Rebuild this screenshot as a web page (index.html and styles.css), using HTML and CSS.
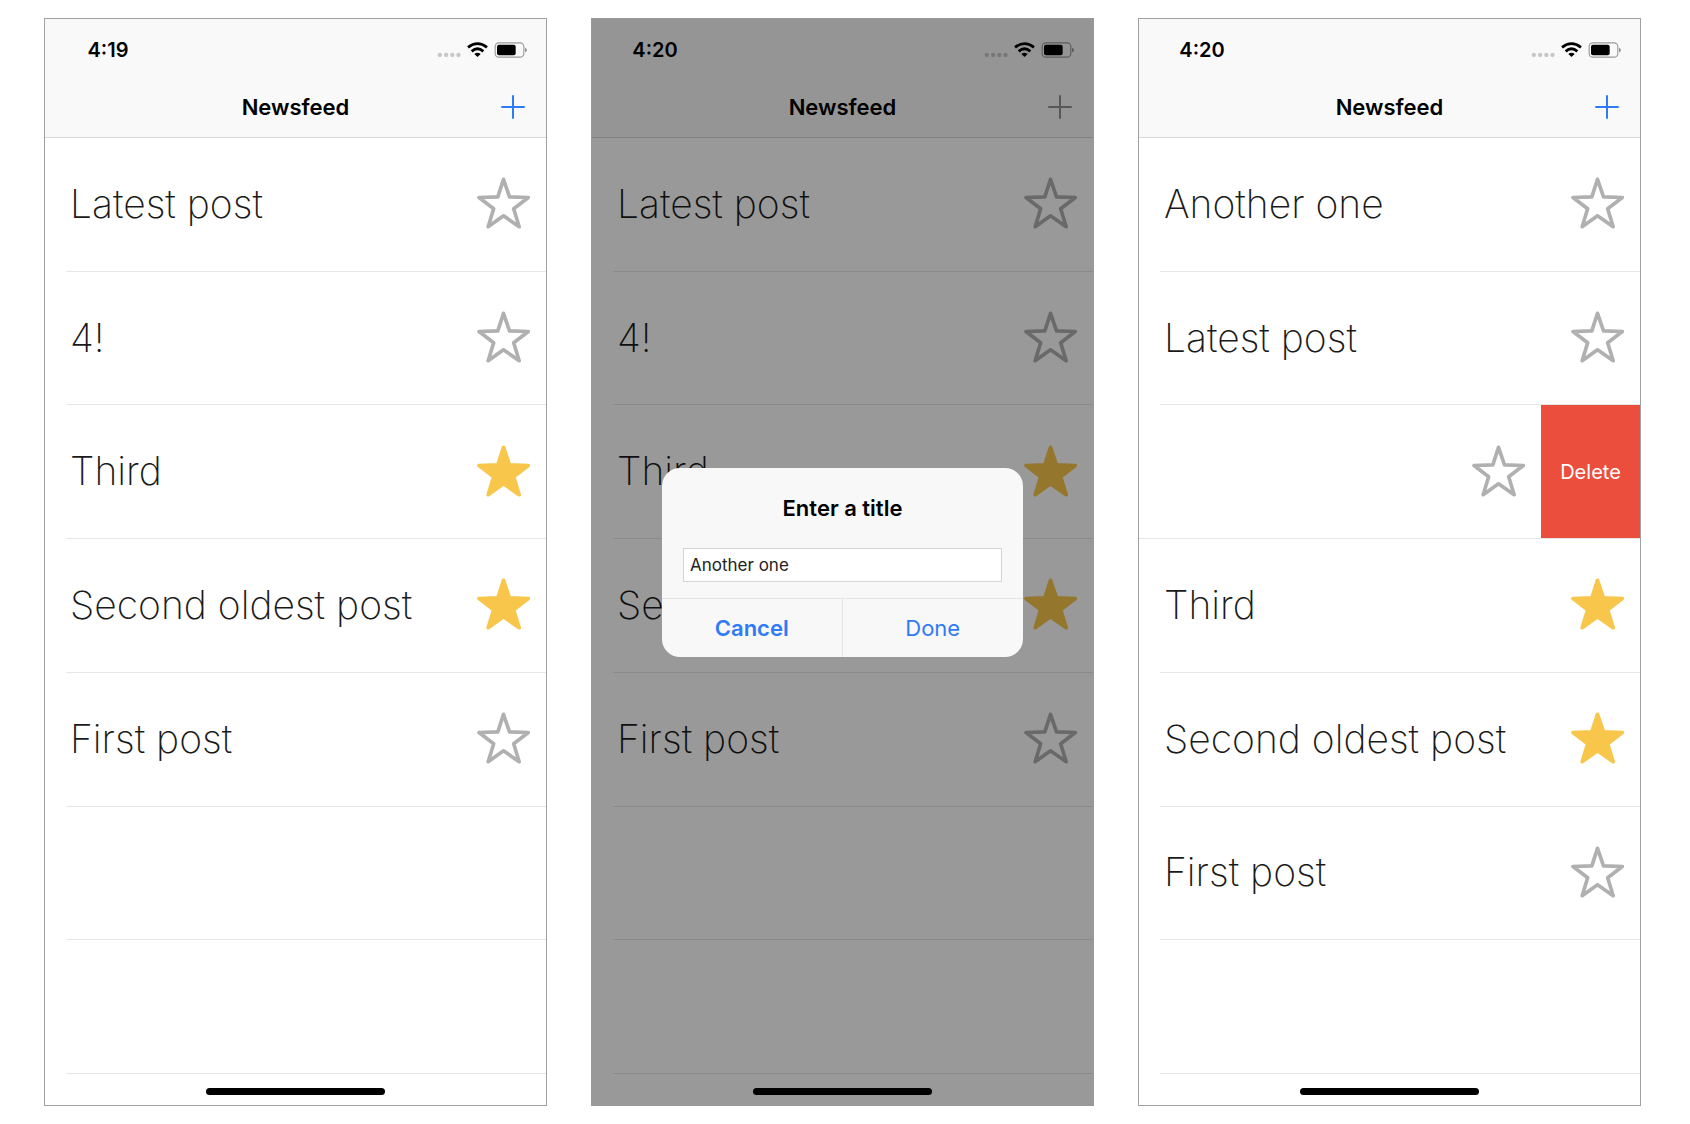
FILE: index.html
```
<!DOCTYPE html>
<html lang="en">
<head>
<meta charset="utf-8">
<title>Newsfeed</title>
<meta name="viewport" content="width=device-width, initial-scale=1">
<link rel="stylesheet" href="styles.css">
</head>
<body>
<svg class="sprite" aria-hidden="true">
  <symbol id="star" viewBox="231 500 159 156">
    <path d="M310.500 507L328.500 559.500L385 561.500L341 595L357.500 649L310.500 616.500L264.500 649L281 595L237 561.500L293.500 559.500Z" stroke-width="11" stroke-linejoin="round"/>
  </symbol>
  <symbol id="status" viewBox="112 90 276 60">
    <g fill="#000" fill-opacity=".2"><circle cx="120.500" cy="135" r="6.500"/><circle cx="139.500" cy="135" r="6.500"/><circle cx="158" cy="135" r="6.500"/><circle cx="176.500" cy="135" r="6.500"/></g>
    <g fill="none" stroke="#000" stroke-width="8.500"><path d="M205 112Q233.500 90 262 112"/><path d="M216 124Q233.500 109 251 124"/></g>
    <path d="M224 132Q233.500 124 243 132L233.500 141Z"/>
    <rect x="286.500" y="98.500" width="86" height="43" rx="11" fill="none" stroke="#000" stroke-opacity=".38" stroke-width="3.500"/>
    <path d="M376 113Q382 115 382 120Q382 125 376 127Z" fill-opacity=".4"/>
    <rect x="292" y="104" width="56" height="32" rx="6"/>
  </symbol>
  <symbol id="plus" viewBox="0 0 24 24"><path d="M12 1V23M1 12H23" fill="none" stroke="currentColor" stroke-width="2" stroke-linecap="round"/></symbol>
</svg>

<main class="gallery">
  <section class="phone">
    <header class="top">
      <div class="status"><span class="time">4:19</span><svg class="indicators" aria-hidden="true"><use href="#status"/></svg></div>
      <div class="nav"><h2 class="nav-title">Newsfeed</h2><button class="add" aria-label="Add post"><svg><use href="#plus"/></svg></button></div>
    </header>
    <ul class="feed">
      <li class="row"><div class="post"><span>Latest post</span><button class="star" aria-label="Favorite"><svg><use href="#star"/></svg></button></div></li>
      <li class="row"><div class="post"><span>4!</span><button class="star" aria-label="Favorite"><svg><use href="#star"/></svg></button></div></li>
      <li class="row"><div class="post"><span>Third</span><button class="star on" aria-label="Favorite"><svg><use href="#star"/></svg></button></div></li>
      <li class="row"><div class="post"><span>Second oldest post</span><button class="star on" aria-label="Favorite"><svg><use href="#star"/></svg></button></div></li>
      <li class="row"><div class="post"><span>First post</span><button class="star" aria-label="Favorite"><svg><use href="#star"/></svg></button></div></li>
      <li class="row"></li>
      <li class="row"></li>
    </ul>
    <footer class="bottom"><div class="home"></div></footer>
  </section>

  <section class="phone dimmed">
    <header class="top">
      <div class="status"><span class="time">4:20</span><svg class="indicators" aria-hidden="true"><use href="#status"/></svg></div>
      <div class="nav"><h2 class="nav-title">Newsfeed</h2><button class="add" aria-label="Add post"><svg><use href="#plus"/></svg></button></div>
    </header>
    <ul class="feed">
      <li class="row"><div class="post"><span>Latest post</span><button class="star" aria-label="Favorite"><svg><use href="#star"/></svg></button></div></li>
      <li class="row"><div class="post"><span>4!</span><button class="star" aria-label="Favorite"><svg><use href="#star"/></svg></button></div></li>
      <li class="row"><div class="post"><span>Third</span><button class="star on" aria-label="Favorite"><svg><use href="#star"/></svg></button></div></li>
      <li class="row"><div class="post"><span>Second oldest post</span><button class="star on" aria-label="Favorite"><svg><use href="#star"/></svg></button></div></li>
      <li class="row"><div class="post"><span>First post</span><button class="star" aria-label="Favorite"><svg><use href="#star"/></svg></button></div></li>
      <li class="row"></li>
      <li class="row"></li>
    </ul>
    <footer class="bottom"><div class="home"></div></footer>
    <div class="overlay">
      <form class="alert" role="dialog" aria-labelledby="alert-title">
        <div class="alert-body">
          <label class="alert-title" id="alert-title" for="post-title">Enter a title</label>
          <input class="alert-input" id="post-title" type="text" value="Another one">
        </div>
        <div class="alert-actions">
          <button class="action cancel" type="button">Cancel</button>
          <button class="action" type="button">Done</button>
        </div>
      </form>
    </div>
  </section>

  <section class="phone">
    <header class="top">
      <div class="status"><span class="time">4:20</span><svg class="indicators" aria-hidden="true"><use href="#status"/></svg></div>
      <div class="nav"><h2 class="nav-title">Newsfeed</h2><button class="add" aria-label="Add post"><svg><use href="#plus"/></svg></button></div>
    </header>
    <ul class="feed">
      <li class="row"><div class="post"><span>Another one</span><button class="star" aria-label="Favorite"><svg><use href="#star"/></svg></button></div></li>
      <li class="row"><div class="post"><span>Latest post</span><button class="star" aria-label="Favorite"><svg><use href="#star"/></svg></button></div></li>
      <li class="row swiped"><div class="post"><button class="star" aria-label="Favorite"><svg><use href="#star"/></svg></button></div><button class="delete">Delete</button></li>
      <li class="row"><div class="post"><span>Third</span><button class="star on" aria-label="Favorite"><svg><use href="#star"/></svg></button></div></li>
      <li class="row"><div class="post"><span>Second oldest post</span><button class="star on" aria-label="Favorite"><svg><use href="#star"/></svg></button></div></li>
      <li class="row"><div class="post"><span>First post</span><button class="star" aria-label="Favorite"><svg><use href="#star"/></svg></button></div></li>
      <li class="row"></li>
    </ul>
    <footer class="bottom"><div class="home"></div></footer>
  </section>
</main>
</body>
</html>
```
FILE: styles.css
```
* {
  box-sizing: border-box;
}

body {
  margin: 0;
  background: #fff;
  color: #000;
  font-family: Inter, "Liberation Sans", sans-serif;
}

button {
  padding: 0;
  border: 0;
  background: none;
  font-family: inherit;
  cursor: pointer;
}

.sprite {
  position: absolute;
  width: 0;
  height: 0;
}

.gallery {
  display: grid;
  grid-template-columns: repeat(3, minmax(0, 1fr));
  gap: 44px;
  min-height: 100vh;
  padding: 18px 49px 18px 44px;
}

.phone {
  position: relative;
  display: flex;
  flex-direction: column;
  border: 1px solid #a0a0a0;
  background: #fff;
}

/* Status bar and navigation bar */
.top {
  border-bottom: 1px solid #d8d8d8;
  background: #f9f9f9;
}

.status {
  display: flex;
  align-items: center;
  justify-content: space-between;
  height: 62px;
  padding: 0 17px 0 24px;
}

.time {
  width: 78px;
  font-size: 20px;
  font-weight: 600;
  text-align: center;
}

.indicators {
  width: 92px;
  height: 20px;
}

.nav {
  display: grid;
  grid-template-columns: 1fr auto 1fr;
  align-items: center;
  height: 56px;
  padding: 0 21px 4px;
}

.nav-title {
  grid-column: 2;
  margin: 0;
  font-size: 22px;
  font-weight: 600;
}

.add {
  justify-self: end;
  color: #2f7bf6;
}

.add svg {
  display: block;
  width: 24px;
  height: 24px;
}

/* Feed */
.feed {
  display: grid;
  flex: 1;
  grid-auto-rows: minmax(0, 1fr);
  margin: 0;
  padding: 0;
  list-style: none;
}

.row {
  display: flex;
  min-height: 80px;
  margin-left: 21px;
  border-bottom: 1px solid #e6e6e6;
}

.post {
  display: flex;
  flex: 1;
  align-items: center;
  justify-content: space-between;
  padding: 0 16px 2px 4px;
  color: #1a1a1a;
  font-size: 39px;
  font-weight: 200;
}

.star svg {
  display: block;
  width: 53px;
  height: 52px;
  fill: none;
  stroke: #b0b0b0;
}

.star.on svg {
  fill: #f7c64b;
  stroke: #f7c64b;
}

.swiped {
  margin-left: 0;
}

.swiped .post {
  justify-content: flex-end;
}

.delete {
  width: 99px;
  background: #ec4e3d;
  color: #fff;
  font-size: 20px;
}

.bottom {
  display: flex;
  justify-content: center;
  height: 31px;
  padding-top: 14px;
}

.home {
  width: 179px;
  height: 7px;
  border-radius: 4px;
  background: #000;
}

/* Prompt over the dimmed screen */
.dimmed {
  border-color: #fff;
}

.dimmed .add {
  color: #929292;
}

.overlay {
  position: absolute;
  inset: -1px;
  display: flex;
  align-items: center;
  justify-content: center;
  background: rgba(0, 0, 0, 0.4);
}

.alert {
  width: 361px;
  overflow: hidden;
  border-radius: 18px;
  background: #f8f8f8;
}

.alert-body {
  display: flex;
  flex-direction: column;
  gap: 26px;
  padding: 26px 21px 16px;
}

.alert-title {
  font-size: 22px;
  font-weight: 600;
  line-height: 28px;
  text-align: center;
}

.alert-input {
  width: 100%;
  height: 34px;
  padding: 0 6px;
  border: 1px solid #d4d4d4;
  border-radius: 0;
  background: #fff;
  color: #222;
  font-family: inherit;
  font-size: 17px;
}

.alert-actions {
  display: grid;
  grid-template-columns: 1fr 1fr;
  border-top: 1px solid #e4e4e4;
}

.action {
  height: 58px;
  color: #2f7bf6;
  font-size: 22px;
}

.cancel {
  border-right: 1px solid #e4e4e4;
  font-weight: 600;
}
```
